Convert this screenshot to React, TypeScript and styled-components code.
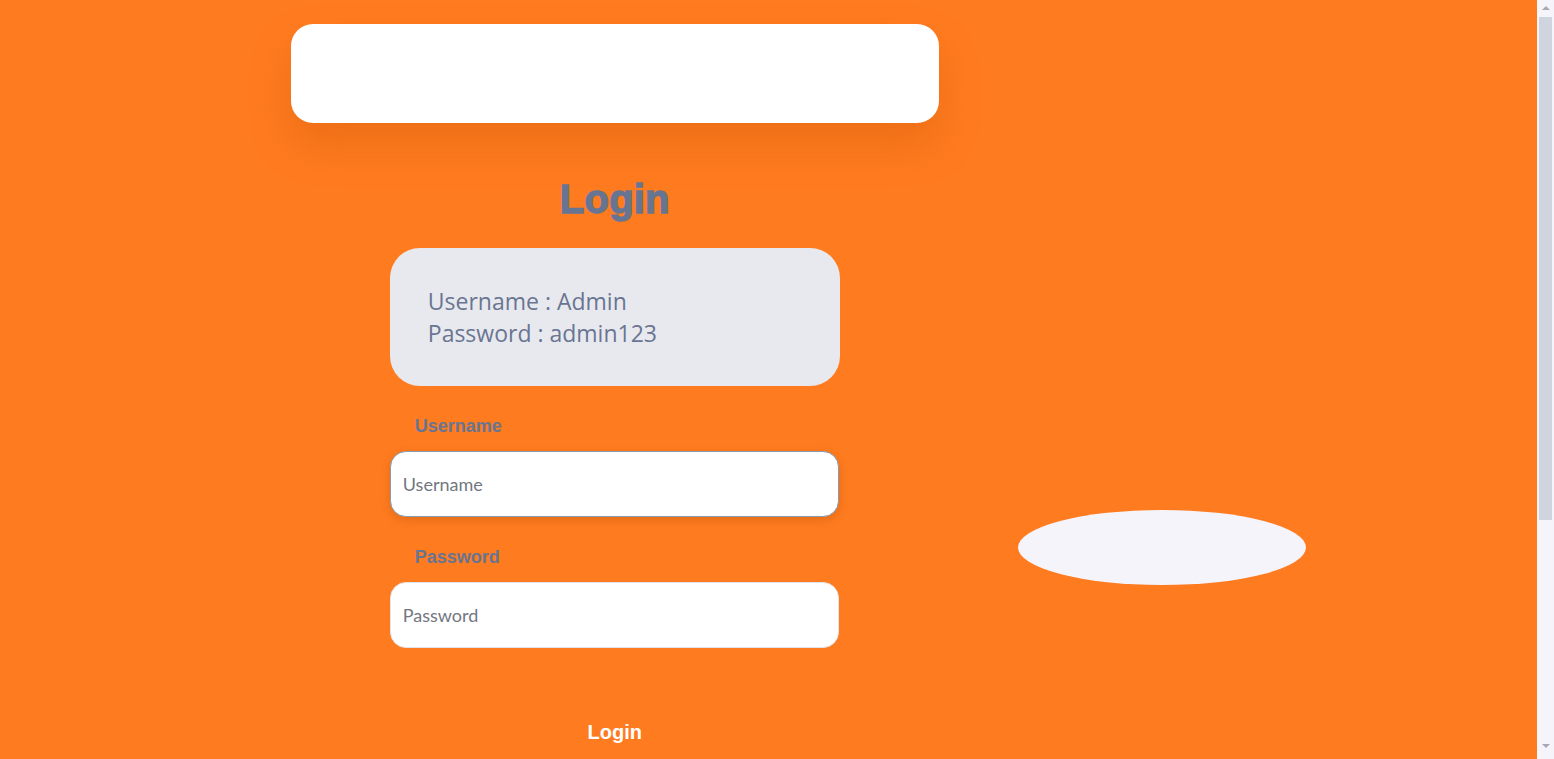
import React from "react";
import styled, { createGlobalStyle } from "styled-components";

const GlobalStyle = createGlobalStyle`
  html, body {
    overflow-x: hidden;
  }
  body {
    margin: 0;
    background: #ff7b1f;
    font-family: "Liberation Sans", Arial, sans-serif;
  }
`;

const Page = styled.div`
  position: relative;
  margin-right: 17px;
  min-height: 1094px;
  background: #ff7b1f;
`;

const MainColumn = styled.main`
  width: 80%;
  display: flex;
  flex-direction: column;
  align-items: center;
`;

const TopCard = styled.div`
  width: 648px;
  height: 99px;
  margin-top: 24px;
  background: #ffffff;
  border-radius: 22px;
  box-shadow: 0 22px 40px rgba(190, 80, 0, 0.28);
`;

const Title = styled.h1`
  margin: 52px 0 0;
  font-family: "Liberation Sans", Arial, sans-serif;
  font-size: 40px;
  line-height: 48px;
  font-weight: 700;
  color: #687592;
  -webkit-text-stroke: 1.4px #687592;
  letter-spacing: 0.2px;
`;

const Form = styled.form`
  width: 450px;
  display: flex;
  flex-direction: column;
`;

const InfoBox = styled.div`
  margin-top: 25px;
  padding: 37px 38px;
  background: #e8e9ee;
  border-radius: 30px;
  font-family: "Open Sans", "Lato", sans-serif;
  font-size: 23px;
  line-height: 32px;
  color: #6a7592;
`;

const Field = styled.div`
  margin-top: 28px;
  display: flex;
  flex-direction: column;
`;

const Label = styled.label`
  padding-left: 25px;
  margin-bottom: 13px;
  font-family: "Liberation Sans", Arial, sans-serif;
  font-weight: 700;
  font-size: 18px;
  line-height: 24px;
  color: #687592;
`;

const Input = styled.input<{ $focused?: boolean }>`
  box-sizing: border-box;
  width: 449px;
  height: 66px;
  padding: 0 12px;
  border-radius: 16px;
  border: 1px solid ${(p) => (p.$focused ? "#8c9aae" : "#e2e3ea")};
  background: #ffffff;
  box-shadow: ${(p) => (p.$focused ? "0 3px 10px rgba(120, 60, 0, 0.22)" : "none")};
  font-family: "Lato", sans-serif;
  font-size: 18px;
  color: #333;
  outline: none;
  &::placeholder {
    color: #72777f;
  }
`;

const SubmitButton = styled.button`
  align-self: center;
  margin-top: 56px;
  padding: 16px 40px;
  background: transparent;
  border: none;
  font-family: "Liberation Sans", Arial, sans-serif;
  font-weight: 700;
  font-size: 20px;
  line-height: 24px;
  color: #ffffff;
  cursor: pointer;
`;

const Blob = styled.div`
  position: absolute;
  left: 1018px;
  top: 510px;
  width: 288px;
  height: 75px;
  border-radius: 50%;
  background: #f4f4fa;
`;

/* Drawing of the browser's vertical scrollbar, lying over the right edge */
const ScrollTrack = styled.div`
  position: fixed;
  top: 0;
  right: 0;
  width: 17px;
  height: 100vh;
  background: #f4f4fa;
  display: flex;
  flex-direction: column;
  align-items: center;
`;

const ArrowButton = styled.div<{ $down?: boolean }>`
  height: 17px;
  width: 17px;
  display: flex;
  justify-content: center;
  align-items: ${(p) => (p.$down ? "flex-start" : "flex-end")};
  padding: ${(p) => (p.$down ? "2px 0 0" : "0 0 7px")};
  box-sizing: border-box;
  &::before {
    content: "";
    width: 0;
    height: 0;
    border-left: 4px solid transparent;
    border-right: 4px solid transparent;
    ${(p) =>
      p.$down
        ? "border-top: 4px solid #a7aab5;"
        : "border-bottom: 4px solid #a7aab5;"}
  }
`;

const ThumbArea = styled.div`
  flex: 1;
  width: 100%;
  padding: 0 2px;
  box-sizing: border-box;
`;

const Thumb = styled.div`
  height: 503px;
  background: #d0d4df;
`;

export default function App() {
  return (
    <>
      <GlobalStyle />
      <Page>
        <MainColumn>
          <TopCard />
          <Title>Login</Title>
          <Form onSubmit={(e) => e.preventDefault()}>
            <InfoBox>
              <div>Username : Admin</div>
              <div>Password : admin123</div>
            </InfoBox>
            <Field>
              <Label htmlFor="username">Username</Label>
              <Input id="username" placeholder="Username" $focused />
            </Field>
            <Field>
              <Label htmlFor="password">Password</Label>
              <Input id="password" type="password" placeholder="Password" />
            </Field>
            <SubmitButton type="submit">Login</SubmitButton>
          </Form>
        </MainColumn>
        <Blob />
      </Page>
      <ScrollTrack>
        <ArrowButton />
        <ThumbArea>
          <Thumb />
        </ThumbArea>
        <ArrowButton $down />
      </ScrollTrack>
    </>
  );
}
